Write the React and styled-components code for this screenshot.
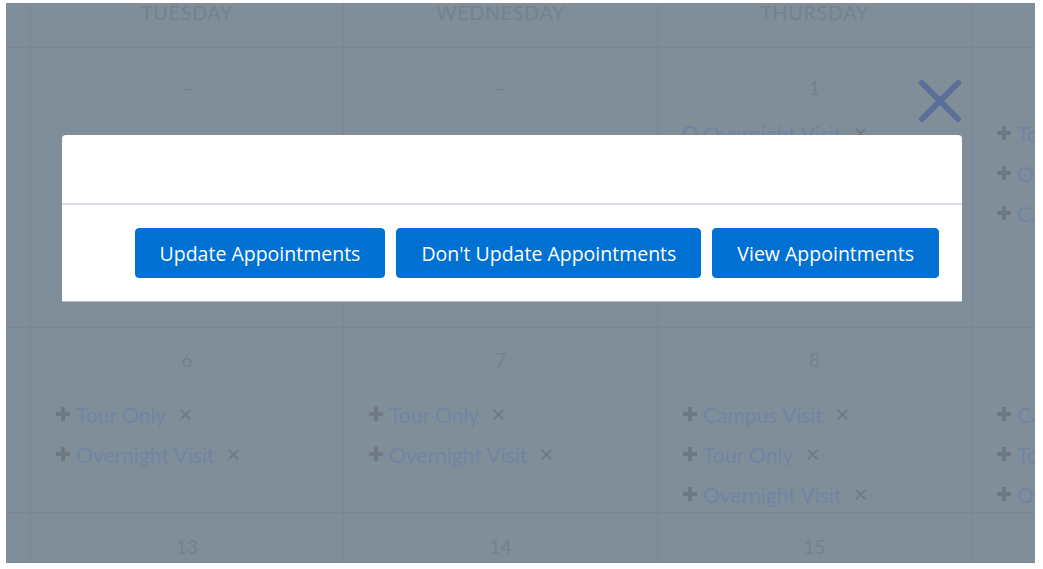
import React from 'react'
import styled, { createGlobalStyle } from 'styled-components'

const GlobalStyle = createGlobalStyle`
  html, body {
    margin: 0;
    padding: 0;
    background: #ffffff;
  }
  body {
    font-family: Lato, "Open Sans", sans-serif;
  }
`

const Page = styled.div`
  width: 1043px;
  height: 569px;
  box-sizing: border-box;
  padding: 3px 8px 6px 6px;
  background: #ffffff;
`

const Stage = styled.div`
  position: relative;
  width: 100%;
  height: 100%;
  background: #808e99;
  overflow: hidden;
`

const Calendar = styled.div`
  display: grid;
  grid-template-columns: 24px 313px 314px 314px 314px;
  grid-template-rows: 45px 280px 185px 1fr;
  height: 100%;
`

const HeadCell = styled.div`
  display: flex;
  justify-content: center;
  align-items: flex-start;
  border-left: ${p => (p.first ? 'none' : '1px solid #7b8893')};
  border-bottom: 1px solid #7b8893;
  overflow: hidden;
`

const DayName = styled.span`
  margin-top: -3px;
  font-size: 20px;
  line-height: 24px;
  letter-spacing: 0.5px;
  color: #75828d;
  text-transform: uppercase;
`

const Cell = styled.div`
  display: flex;
  flex-direction: column;
  padding: ${p => p.top}px 0 0 24px;
  border-left: ${p => (p.first ? 'none' : '1px solid #7b8893')};
  border-bottom: 1px solid #7b8893;
  overflow: hidden;
  white-space: nowrap;
`

const DateLabel = styled.div`
  height: 24px;
  line-height: 24px;
  padding-right: 24px;
  text-align: center;
  font-size: 19px;
  color: #74818c;
`

const Items = styled.div`
  display: flex;
  flex-direction: column;
  margin-top: ${p => p.gap}px;
`

const Item = styled.div`
  display: flex;
  align-items: center;
  height: 40px;
  font-size: 21px;

  svg {
    flex-shrink: 0;
  }
`

const Label = styled.span`
  margin-left: ${p => p.indent || 5}px;
  color: ${p => (p.tone === 'dark' ? '#747e88' : '#7085a3')};
`

const Strong = styled.span`
  margin-left: 5px;
  font-weight: 700;
  color: #857f8c;
`

const Remove = styled.span`
  margin-left: 12px;
  font-size: 18px;
  color: #6e7a85;
`

const Backdrop = styled.div`
  position: absolute;
  inset: 0;
`

const Modal = styled.div`
  position: absolute;
  left: 56px;
  top: 132px;
  width: 900px;
  background: #ffffff;
  border-radius: 4px 4px 0 0;
  box-shadow: 0 1px 0 #b9c1c9;
  font-family: "Open Sans", Lato, sans-serif;
`

const ModalHeader = styled.div`
  height: 68px;
  border-bottom: 2px solid #d8dde8;
`

const ModalFooter = styled.div`
  display: flex;
  justify-content: flex-end;
  gap: 11px;
  padding: 23px 23px 23px;
`

const Button = styled.button`
  height: 50px;
  padding: 0 24px;
  border: 1px solid #0070d2;
  border-radius: 4px;
  background: #0070d2;
  color: #ffffff;
  font-family: "Open Sans", sans-serif;
  font-size: 19.5px;
  font-weight: 500;
  cursor: pointer;
`

const Close = styled.button`
  position: absolute;
  left: 911px;
  top: 75px;
  width: 46px;
  height: 46px;
  padding: 0;
  border: none;
  background: transparent;
  cursor: pointer;
`

const Plus = () => (
  <svg width="16" height="16" viewBox="0 0 16 16">
    <path d="M8 1v14M1 8h14" stroke="#6d7883" strokeWidth="3.8" />
  </svg>
)

const Ring = () => (
  <svg width="16" height="16" viewBox="0 0 16 16">
    <circle cx="8" cy="8" r="6.2" fill="none" stroke="#6f82a0" strokeWidth="2" />
  </svg>
)

const days = ['', 'Tuesday', 'Wednesday', 'Thursday', 'Friday']

const weeks = [
  {
    top: 28,
    gap: 13,
    cells: [
      { date: '', items: [] },
      { date: '–', items: [] },
      { date: '–', items: [] },
      {
        date: '1',
        items: [
          { label: 'Overnight Visit', ring: true },
          { label: 'Tour Only' },
          { label: 'Campus Visit' },
          { label: 'Overnight Visit' },
          { label: 'coach', full: true }
        ]
      },
      { date: '2', items: [{ label: 'Tour Only' }, { label: 'Overnight Visit' }, { label: 'Campus Visit' }] }
    ]
  },
  {
    top: 20,
    gap: 22,
    cells: [
      { date: '', items: [] },
      { date: '6', items: [{ label: 'Tour Only' }, { label: 'Overnight Visit' }] },
      { date: '7', items: [{ label: 'Tour Only' }, { label: 'Overnight Visit' }] },
      { date: '8', items: [{ label: 'Campus Visit' }, { label: 'Tour Only' }, { label: 'Overnight Visit' }] },
      { date: '9', items: [{ label: 'Campus Visit' }, { label: 'Tour Only' }, { label: 'Overnight Visit' }] }
    ]
  },
  {
    top: 22,
    gap: 22,
    cells: [
      { date: '', items: [] },
      { date: '13', items: [] },
      { date: '14', items: [] },
      { date: '15', items: [] },
      { date: '16', items: [] }
    ]
  }
]

export default function App() {
  return (
    <Page>
      <GlobalStyle />
      <Stage>
        <Calendar>
          {days.map((d, i) => (
            <HeadCell key={'h' + i} first={i === 0}>
              <DayName>{d}</DayName>
            </HeadCell>
          ))}
          {weeks.map((w, wi) =>
            w.cells.map((c, ci) => (
              <Cell key={wi + '-' + ci} top={w.top} first={ci === 0}>
                <DateLabel>{c.date}</DateLabel>
                <Items gap={w.gap}>
                  {c.items.map((it, ii) => (
                    <Item key={ii}>
                      {it.ring ? <Ring /> : it.full ? null : <Plus />}
                      {it.full ? (
                        <>
                          <Label tone="dark" indent={41}>{it.label}</Label>
                          <Strong>FULL</Strong>
                        </>
                      ) : (
                        <Label>{it.label}</Label>
                      )}
                      <Remove>✕</Remove>
                    </Item>
                  ))}
                </Items>
              </Cell>
            ))
          )}
        </Calendar>
        <Backdrop>
          <Close aria-label="Close">
            <svg width="46" height="46" viewBox="0 0 46 46">
              <path d="M5 5L41 41M41 5L5 41" stroke="#596e98" strokeWidth="6" strokeLinecap="round" />
            </svg>
          </Close>
          <Modal>
            <ModalHeader />
            <ModalFooter>
              <Button>Update Appointments</Button>
              <Button>Don't Update Appointments</Button>
              <Button>View Appointments</Button>
            </ModalFooter>
          </Modal>
        </Backdrop>
      </Stage>
    </Page>
  )
}
